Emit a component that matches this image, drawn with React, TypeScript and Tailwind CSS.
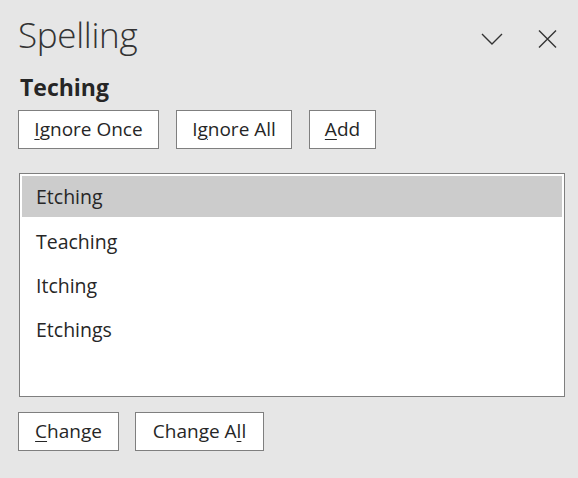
import { ReactNode } from "react";

const font = { fontFamily: '"Open Sans", "Noto Sans", sans-serif' };

function AccessKey({ children }: { children: ReactNode }) {
  return <span className="underline underline-offset-[3px] decoration-1">{children}</span>;
}

function PaneButton({ children, className = "" }: { children: ReactNode; className?: string }) {
  return (
    <button
      className={`h-[39px] border border-[#7f7f7f] bg-white text-[19px] text-[#262626] leading-none ${className}`}
    >
      {children}
    </button>
  );
}

const suggestions = ["Etching", "Teaching", "Itching", "Etchings"];

export default function App() {
  return (
    <div className="w-[578px] h-[478px] bg-[#e6e6e6] text-[#262626] pl-[18px] pr-[14px]" style={font}>
      {/* header */}
      <div className="flex items-start justify-between h-[52px]">
        <h1 className="pt-[17px] text-[35px] font-light leading-none tracking-[-0.3px] text-[#333]">
          Spelling
        </h1>
        <div className="flex items-center gap-[35px] pt-[30px] pr-[7px]">
          <svg width="22" height="12" viewBox="0 0 22 12" fill="none" stroke="#333" strokeWidth="1.4">
            <path d="M1 1l10 10L21 1" />
          </svg>
          <svg width="19" height="18" viewBox="0 0 19 18" fill="none" stroke="#333" strokeWidth="1.4">
            <path d="M1 0.5l17 17M18 0.5L1 17.5" />
          </svg>
        </div>
      </div>

      <div className="mt-[24px] pl-[2px] text-[23px] font-bold leading-none">Teching</div>

      <div className="flex gap-[17px] mt-[11px]">
        <PaneButton className="w-[141px]">
          <AccessKey>I</AccessKey>gnore Once
        </PaneButton>
        <PaneButton className="w-[116px]">
          I<AccessKey>g</AccessKey>nore All
        </PaneButton>
        <PaneButton className="w-[67px]">
          <AccessKey>A</AccessKey>dd
        </PaneButton>
      </div>

      {/* suggestion list */}
      <div className="mt-[24px] ml-[1px] w-[546px] h-[224px] border border-[#7f7f7f] bg-white p-[2px]">
        {suggestions.map((word, i) => (
          <div
            key={word}
            className={`flex items-center pl-[14px] text-[19.5px] ${
              i === 0 ? "bg-[#cccccc] h-[41px] mb-[3px]" : "h-[44px]"
            }`}
          >
            {word}
          </div>
        ))}
      </div>

      <div className="flex gap-[16px] mt-[15px]">
        <PaneButton className="w-[101px]">
          <AccessKey>C</AccessKey>hange
        </PaneButton>
        <PaneButton className="w-[129px]">
          Change A<AccessKey>l</AccessKey>l
        </PaneButton>
      </div>
    </div>
  );
}
